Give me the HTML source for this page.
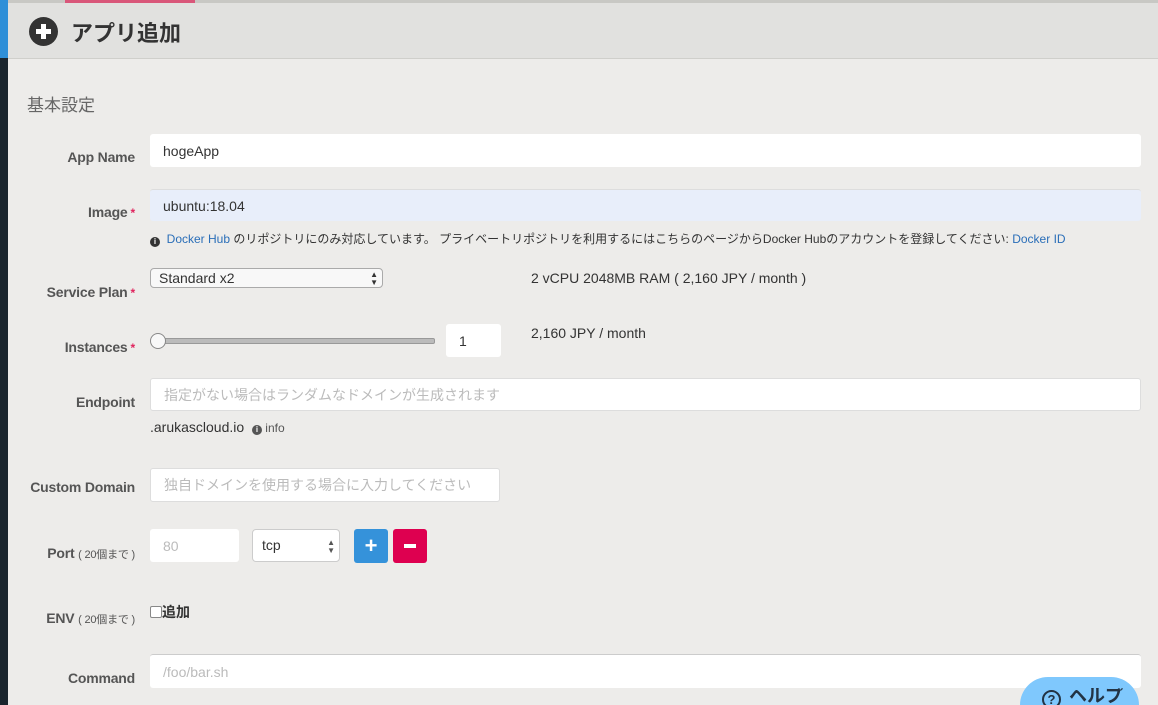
<!DOCTYPE html>
<html style="overflow:hidden;width:1158px;height:705px"><head><meta charset="utf-8"><style>
body{margin:0;width:1158px;height:705px;overflow:hidden;background:#edecea;font-family:"Liberation Sans","Noto Sans CJK JP",sans-serif;position:relative;color:#333}
.a{position:absolute}
.lbl{position:absolute;right:1023px;font-weight:bold;font-size:14px;color:#555;white-space:nowrap;letter-spacing:-0.2px}
.lbl small{font-weight:normal;font-size:11px}
.st{color:#e0245e;font-size:12px;margin-left:3px}
.in{position:absolute;background:#fff;border-radius:3px;font-size:14px;box-sizing:border-box;padding-left:13px;display:flex;align-items:center}
.ph{color:#bbb}
</style></head><body>
<div class="a" style="left:0;top:0;width:8px;height:705px;background:#1a252e"></div>
<div class="a" style="left:0;top:0;width:8px;height:58px;background:#2e8fd8"></div>
<div class="a" style="left:8px;top:0;width:1150px;height:3px;background:#c8c8c4"></div>
<div class="a" style="left:65px;top:0;width:130px;height:3px;background:#d9577a"></div>
<div class="a" style="left:8px;top:3px;width:1150px;height:55px;background:#e1e1df;border-bottom:1px solid #cfcfcb"></div>
<div class="a" style="left:29px;top:17px;width:29px;height:29px;border-radius:50%;background:#333"></div>
<div class="a" style="left:36px;top:29px;width:15px;height:5px;background:#fff"></div>
<div class="a" style="left:41px;top:24px;width:5px;height:15px;background:#fff"></div>
<div class="a" style="left:71px;top:16px;font-size:22px;font-weight:bold;color:#333">アプリ追加</div>
<div class="a" style="left:27px;top:91px;font-size:17px;color:#666">基本設定</div>

<div class="lbl" style="top:149px">App Name</div>
<div class="in" style="left:150px;top:134px;width:991px;height:33px">hogeApp</div>
<div class="lbl" style="top:204px">Image<span class="st">*</span></div>
<div class="in" style="left:150px;top:189px;width:991px;height:32px;background:#e8eefa;border-top:1px solid #ddd">ubuntu:18.04</div>
<div class="a" style="left:150px;top:230px;font-size:12px;color:#333;white-space:nowrap"><span style="display:inline-block;width:10px;height:10px;border-radius:50%;background:#333;color:#fff;font-size:8px;text-align:center;line-height:10px;font-weight:bold;vertical-align:-1px">i</span>&nbsp; <span style="color:#2a6eb8">Docker Hub</span> のリポジトリにのみ対応しています。 プライベートリポジトリを利用するにはこちらのページからDocker Hubのアカウントを登録してください: <span style="color:#2a6eb8">Docker ID</span></div>
<div class="lbl" style="top:284px">Service Plan<span class="st">*</span></div>
<div class="a" style="left:150px;top:268px;width:233px;height:20px;background:#f8f8f8;border:1px solid #aaa;border-radius:4px;font-size:14px;box-sizing:border-box;padding-left:8px;line-height:18px">Standard x2<span style="position:absolute;right:4px;font-size:8px;line-height:8px;top:2px">▲<br>▼</span></div>
<div class="a" style="left:531px;top:270px;font-size:14px">2 vCPU 2048MB RAM ( 2,160 JPY / month )</div>
<div class="lbl" style="top:339px">Instances<span class="st">*</span></div>
<div class="a" style="left:157px;top:338px;width:276px;height:4px;background:#bbb;border-radius:2px;border:1px solid #999"></div>
<div class="a" style="left:150px;top:333px;width:14px;height:14px;border-radius:50%;background:#f8f8f8;border:1px solid #888"></div>
<div class="in" style="left:446px;top:324px;width:55px;height:33px">1</div>
<div class="a" style="left:531px;top:325px;font-size:14px">2,160 JPY / month</div>
<div class="lbl" style="top:394px">Endpoint</div>
<div class="in" style="left:150px;top:378px;width:991px;height:33px;border:1px solid #ddd"><span class="ph">指定がない場合はランダムなドメインが生成されます</span></div>
<div class="a" style="left:150px;top:419px;font-size:14px">.arukascloud.io &nbsp;<span style="font-size:12px;color:#555"><span style="display:inline-block;width:10px;height:10px;border-radius:50%;background:#555;color:#fff;font-size:8px;text-align:center;line-height:10px;font-weight:bold">i</span> info</span></div>
<div class="lbl" style="top:479px">Custom Domain</div>
<div class="in" style="left:150px;top:468px;width:350px;height:34px;border:1px solid #ddd"><span class="ph">独自ドメインを使用する場合に入力してください</span></div>
<div class="lbl" style="top:545px">Port <small>( 20個まで )</small></div>
<div class="in" style="left:150px;top:529px;width:89px;height:33px"><span class="ph">80</span></div>
<div class="a" style="left:252px;top:529px;width:88px;height:33px;background:#fff;border:1px solid #ccc;border-radius:4px;box-sizing:border-box;padding-left:9px;font-size:14px;line-height:31px">tcp<span style="position:absolute;right:4px;top:9px;font-size:8px;line-height:8px;color:#555">▲<br>▼</span></div>
<div class="a" style="left:354px;top:529px;width:34px;height:34px;background:#3592da;border-radius:3px;color:#fff;font-size:22px;font-weight:bold;text-align:center;line-height:33px">+</div>
<div class="a" style="left:393px;top:529px;width:34px;height:34px;background:#de0050;border-radius:3px"><div class="a" style="left:11px;top:15px;width:12px;height:4px;background:#fff"></div></div>
<div class="lbl" style="top:610px">ENV <small>( 20個まで )</small></div>
<div class="a" style="left:150px;top:606px;width:10px;height:10px;border:1px solid #888;border-radius:2px;background:#fff"></div>
<div class="a" style="left:162px;top:602px;font-size:14px;font-weight:bold">追加</div>
<div class="lbl" style="top:670px">Command</div>
<div class="in" style="left:150px;top:654px;width:991px;height:34px;border-top:1px solid #ccc"><span class="ph">/foo/bar.sh</span></div>
<div class="a" style="left:1020px;top:677px;width:119px;height:28px;border-radius:30px 30px 0 0;background:#7fc8fd;overflow:hidden"></div>
<div class="a" style="left:1042px;top:690px;width:15px;height:15px;border:2px solid #234;border-radius:50%;font-size:13px;text-align:center;line-height:15px;color:#234;font-weight:bold">?</div>
<div class="a" style="left:1069px;top:688px;font-size:18px;font-weight:bold;color:#234;line-height:17px;height:17px;overflow:hidden">ヘルプ</div>
</body></html>
